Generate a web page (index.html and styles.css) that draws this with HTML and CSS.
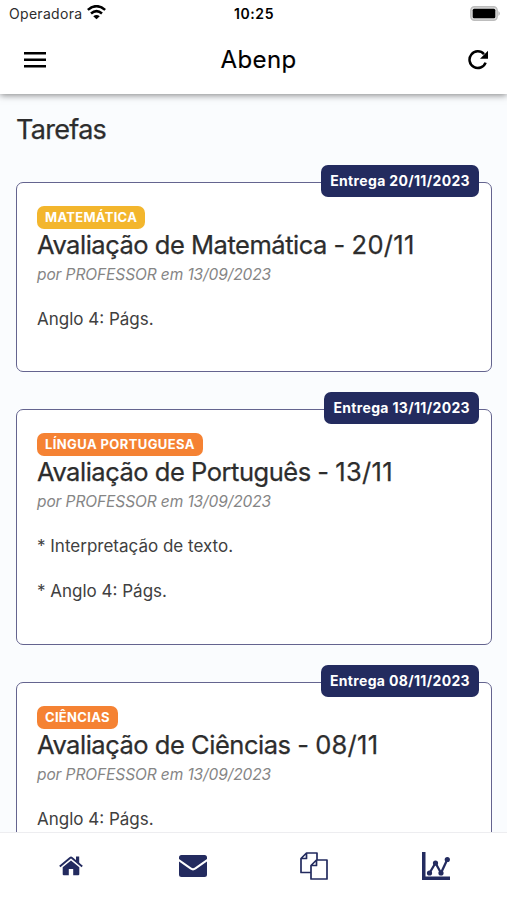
FILE: index.html
```html
<!DOCTYPE html>
<html lang="pt-BR">
<head>
<meta charset="utf-8">
<title>Abenp</title>
<link rel="stylesheet" href="styles.css">
</head>
<body>
<header class="header">
  <div class="status">
    <div class="carrier"><span>Operadora</span>
      <svg class="wifi" width="19" height="15" viewBox="0 0 18 14" fill="none" stroke="#000" stroke-width="2.4"><path d="M.8 4.5Q9-2.5 17.2 4.5M3.800 8Q9 3.500 14.200 8"/><path d="M9 13.500 5.900 10.500Q9 8.200 12.100 10.500Z" fill="#000" stroke="none"/></svg>
    </div>
    <span class="time">10:25</span>
    <svg class="battery" width="31" height="16" viewBox="0 0 31 16"><rect x=".8" y=".8" width="26.4" height="13.4" rx="3.6" fill="#ddd" stroke="#bdbdbd" stroke-width="1.4"/><rect x="2.700" y="2.700" width="22.600" height="9.600" rx="1.500"/><path d="M28.500 5Q31 7.500 28.500 10Z" fill="#aaa"/></svg>
  </div>
  <div class="toolbar">
    <svg width="22" height="16" viewBox="0 0 22 16"><path d="M0 0h22v2.5H0zM0 6.500h22V9H0zM0 13h22v2.500H0z"/></svg>
    <h1 class="brand">Abenp</h1>
    <svg width="20" height="20" viewBox="0 0 20 20"><path d="M17.600 12.600A8.300 8.300 0 1 1 16 4.100" fill="none" stroke="#000" stroke-width="2.500"/><path d="M20 .7v8h-8z"/></svg>
  </div>
</header>
<main class="content">
  <h2 class="heading">Tarefas</h2>
  <div class="list">
    <article class="card">
      <div class="due">Entrega 20/11/2023</div>
      <div class="tag yellow">MATEMÁTICA</div>
      <h3 class="title">Avaliação de Matemática - <span class="date">20/11</span></h3>
      <p class="author">por PROFESSOR em 13/09/2023</p>
      <p class="text">Anglo 4: Págs.</p>
    </article>
    <article class="card tall">
      <div class="due">Entrega 13/11/2023</div>
      <div class="tag orange wide">LÍNGUA PORTUGUESA</div>
      <h3 class="title">Avaliação de Português - <span class="date">13/11</span></h3>
      <p class="author">por PROFESSOR em 13/09/2023</p>
      <p class="text">* Interpretação de texto.</p>
      <p class="text">* Anglo 4: Págs.</p>
    </article>
    <article class="card">
      <div class="due">Entrega 08/11/2023</div>
      <div class="tag orange">CIÊNCIAS</div>
      <h3 class="title">Avaliação de Ciências - <span class="date">08/11</span></h3>
      <p class="author">por PROFESSOR em 13/09/2023</p>
      <p class="text">Anglo 4: Págs.</p>
    </article>
  </div>
</main>
<nav class="tabs">
  <a class="tab"><svg width="24" height="20" viewBox="0 0 24 20"><path d="M12 4.400 3.700 11.200v7q0 1.100 1.100 1.100h5V13h4.400v6.300h5q1.100 0 1.100-1.100v-7z"/><path d="M.8 10.500 11 1.900Q12 1.100 13 1.900L23.200 10.500" fill="none" stroke="#232b5f" stroke-width="1.900"/><path d="M17 .4h3.200v8L17 5.600z"/></svg></a>
  <a class="tab"><svg width="28" height="22" viewBox="0 0 28 22"><path d="M2.500 0h23Q28 0 28 2.500V4L16.200 12.300Q14 14 11.800 12.300L0 4V2.500Q0 0 2.500 0z"/><path d="M0 6.500 11 14.300Q14 16.500 17 14.300L28 6.500V19.500Q28 22 25.500 22h-23Q0 22 0 19.500z"/></svg></a>
  <a class="tab"><svg width="28" height="28" viewBox="0 0 28 28" fill="none" stroke="#232b5f" stroke-width="1.700" stroke-linejoin="round"><path d="M11 20.500H1V6.500L6.500 1H17V8M6.500 1v5.500H1M16.500 8H27v19H11V13.500zM16.500 8v5.500H11"/></svg></a>
  <a class="tab"><svg width="28" height="28" viewBox="0 0 28 28"><path d="M0 0h3.500v24.500H28V28H0z"/><path d="M7.500 21 13.500 11 19 21 25.300 7.500" fill="none" stroke="#232b5f" stroke-width="2.300"/><circle cx="7.500" cy="21" r="2.600"/><circle cx="13.500" cy="11" r="2.600"/><circle cx="19" cy="21" r="2.600"/><circle cx="25.300" cy="7.500" r="2.600"/></svg></a>
</nav>
</body>
</html>
```
FILE: styles.css
```css
* { box-sizing: border-box; }
body { margin: 0; height: 900px; display: flex; flex-direction: column; overflow: hidden; background: #fafcfe; color: #2d2d2d; font-family: Inter, "Liberation Sans", sans-serif; }
h1, h2, h3, p { margin: 0; font-weight: 400; }
svg { display: block; }
.header { flex: none; height: 94px; background: #fff; box-shadow: 0 1px 7px rgba(0, 0, 0, .5); z-index: 1; }
.status { height: 27px; padding: 0 6px 0 9px; display: grid; grid-template-columns: 1fr auto 1fr; align-items: center; font-size: 14px; }
.carrier { display: flex; gap: 5px; align-items: center; letter-spacing: .3px; }
.wifi { margin-bottom: 2px; }
.time { font-weight: 600; color: #000; letter-spacing: .6px; margin-right: 2px; }
.battery { justify-self: end; }
.toolbar { height: 64px; padding: 1px 19px 0 24px; display: flex; align-items: center; justify-content: space-between; color: #000; }
.brand { padding-left: 3px; font-size: 24px; font-weight: 400; letter-spacing: .4px; -webkit-text-stroke: .15px; }
.content { flex: 1; min-height: 0; overflow: hidden; padding: 19px 15px 0 16px; }
.heading { font-size: 27px; line-height: 34px; letter-spacing: -.7px; margin-bottom: 35px; -webkit-text-stroke: .25px; }
.list { display: flex; flex-direction: column; gap: 37px; }
.card { position: relative; height: 190px; border: 1.500px solid #64648f; border-radius: 7px; background: #fff; padding: 23px 20px; }
.card.tall { height: 236px; }
.due { position: absolute; right: 12px; top: -18px; height: 32px; padding: 0 9px; border-radius: 7px; background: #232b5f; color: #fff; font-size: 14px; font-weight: 700; line-height: 31px; letter-spacing: .34px; white-space: nowrap; }
.tag { width: max-content; height: 23px; padding: 0 8px; border-radius: 7px; color: #fff; font-size: 13px; font-weight: 700; line-height: 23px; letter-spacing: .3px; }
.wide { letter-spacing: .4px; }
.yellow { background: #f3b62d; }
.orange { background: #f58233; }
.title { font-size: 25.500px; line-height: 32px; letter-spacing: -.48px; white-space: nowrap; -webkit-text-stroke: .25px; }
.date { letter-spacing: .3px; }
.author { padding-top: 1px; font-size: 15.500px; line-height: 26px; font-style: italic; letter-spacing: -.1px; color: #858585; }
.text { margin-top: 19px; font-size: 17px; line-height: 26px; color: #404040; }
.author + .text { margin-top: 18px; }
.tabs { flex: none; height: 68px; padding: 0 10px 2px; display: grid; grid-template-columns: repeat(4, 1fr); background: #fff; border-top: 1px solid #ededf0; z-index: 1; }
.tab { display: grid; place-items: center; fill: #232b5f; }
```
